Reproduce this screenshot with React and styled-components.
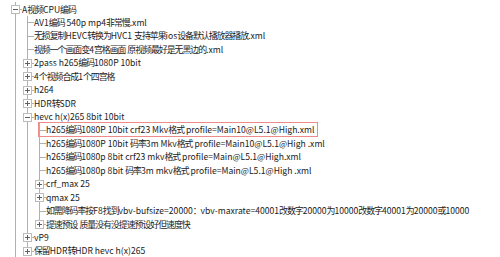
import styled, { createGlobalStyle } from "styled-components";

const GlobalStyle = createGlobalStyle`
  html, body {
    margin: 0;
    padding: 0;
    background: #fff;
  }
  body {
    width: 500px;
    height: 257px;
    overflow: hidden;
  }
`;

const LINE = "#b0b0b0";

const Tree = styled.div`
  padding: 2.3px 0 0 9px;
  font-family: "Noto Sans CJK SC", sans-serif;
  font-size: 8.6px;
  color: #1a1a1a;
`;

const Row = styled.div`
  display: flex;
  align-items: center;
  height: 13.44px;
  white-space: nowrap;
`;

const Cell = styled.div`
  position: relative;
  flex: 0 0 12px;
  align-self: stretch;

  &::before {
    content: "";
    position: absolute;
    left: 6px;
    width: 1px;
    top: 0;
    background: ${LINE};
    display: ${(p) => (p.$kind === "none" ? "none" : "block")};
    height: ${(p) => (p.$kind === "elbow" ? "50%" : "100%")};
  }

  &::after {
    content: "";
    position: absolute;
    left: 6px;
    right: -1px;
    top: 50%;
    height: 1px;
    background: ${LINE};
    display: ${(p) => (p.$kind === "tee" || p.$kind === "elbow" ? "block" : "none")};
  }
`;

const Expander = styled.span`
  position: absolute;
  z-index: 1;
  left: 2px;
  top: 50%;
  width: 9px;
  height: 9px;
  margin-top: -4px;
  box-sizing: border-box;
  border: 1px solid #bcbcbc;
  background: #fff;

  &::before,
  &::after {
    content: "";
    position: absolute;
    background: #606060;
  }
  &::before {
    left: 1px;
    right: 1px;
    top: 3px;
    height: 1px;
  }
  &::after {
    display: ${(p) => (p.$open ? "none" : "block")};
    top: 1px;
    bottom: 1px;
    left: 3px;
    width: 1px;
  }
`;

const Label = styled.span`
  box-sizing: border-box;
  height: 15px;
  line-height: 13px;
  margin-left: ${(p) => (p.$selected ? "-7px" : "1px")};
  padding: ${(p) => (p.$selected ? "0 3px 0 7px" : "0")};
  border: ${(p) => (p.$selected ? "1px solid #ee8a8a" : "1px solid transparent")};
  border-left-width: ${(p) => (p.$selected ? "1px" : "0")};
`;

// Chinese glyphs in the source font run a little tighter than 1em
const Han = styled.span`
  font-size: 8.9px;
  letter-spacing: -1px;
`;

const rows = [
  { level: 1, open: true, kids: true, text: "A视频CPU编码" },
  { level: 2, text: "AV1编码 540p mp4非常慢.xml" },
  { level: 2, text: "无损复制HEVC转换为HVC1 支持苹果ios设备默认播放器播放.xml" },
  { level: 2, text: "视频一个画面变4宫格画面 原视频最好是无黑边的.xml" },
  { level: 2, kids: true, text: "2pass h265编码1080P 10bit" },
  { level: 2, kids: true, text: "4个视频合成1个四宫格" },
  { level: 2, kids: true, text: "h264" },
  { level: 2, kids: true, text: "HDR转SDR" },
  { level: 2, kids: true, open: true, text: "hevc h(x)265 8bit 10bit" },
  { level: 3, selected: true, text: "h265编码1080P 10bit crf23 Mkv格式 profile=Main10@L5.1@High.xml" },
  { level: 3, text: "h265编码1080P 10bit 码率3m Mkv格式 profile=Main10@L5.1@High .xml" },
  { level: 3, text: "h265编码1080p 8bit crf23 mkv格式 profile=Main@L5.1@High.xml" },
  { level: 3, text: "h265编码1080p 8bit 码率3m mkv格式 profile=Main@L5.1@High .xml" },
  { level: 3, kids: true, text: "crf_max 25" },
  { level: 3, kids: true, text: "qmax 25" },
  { level: 3, text: "如需降码率按F8找到vbv-bufsize=20000：vbv-maxrate=40001改数字20000为10000改数字40001为20000或10000" },
  { level: 3, kids: true, text: "提速预设 质量没有没提速预设好但速度快" },
  { level: 2, kids: true, text: "vP9" },
  { level: 2, kids: true, text: "保留HDR转HDR hevc h(x)265" },
];

// more level-1 siblings follow below the visible area
const all = [...rows, { level: 1 }];

const continues = (i, level) => {
  for (let j = i + 1; j < all.length; j++) {
    if (all[j].level <= level) return all[j].level === level;
  }
  return false;
};

const cellsFor = (i) => {
  const { level } = rows[i];
  const out = [];
  for (let c = 1; c < level; c++) out.push(continues(i, c) ? "pipe" : "none");
  out.push(continues(i, level) ? "tee" : "elbow");
  return out;
};

const renderText = (text) =>
  text.split(/([\u3000-\u9fff\uff00-\uffef]+)/).map((part, i) =>
    i % 2 ? <Han key={i}>{part}</Han> : part
  );

export default function App() {
  return (
    <>
      <GlobalStyle />
      <Tree>
        {rows.map((r, i) => {
          const cells = cellsFor(i);
          return (
            <Row key={i}>
              {cells.map((k, c) => (
                <Cell key={c} $kind={k}>
                  {c === cells.length - 1 && r.kids && <Expander $open={r.open} />}
                </Cell>
              ))}
              <Label $selected={r.selected}>{renderText(r.text)}</Label>
            </Row>
          );
        })}
      </Tree>
    </>
  );
}
